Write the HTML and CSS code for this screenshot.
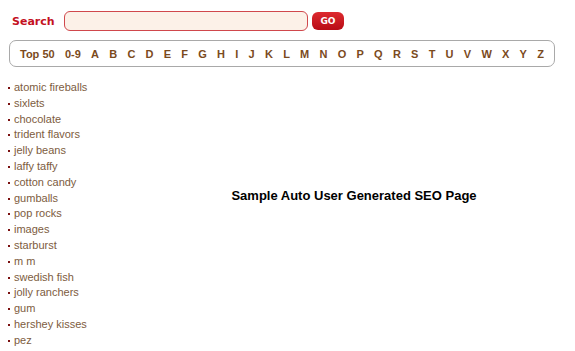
FILE: index.html
```html
<!DOCTYPE html>
<html lang="en">
<head>
    <meta charset="UTF-8">
    <title>Sample Auto User Generated SEO Page</title>
    <link rel="stylesheet" href="styles.css">
</head>
<body>
    <div class="page">
        <form class="search">
            <label class="search-label" for="q">Search</label>
            <input class="search-input" id="q" type="text">
            <button class="search-go" type="button">GO</button>
        </form>
        <div class="letters">
            <a href="#">Top 50</a>
            <a href="#">0-9</a>
            <a href="#">A</a><a href="#">B</a><a href="#">C</a><a href="#">D</a><a href="#">E</a>
            <a href="#">F</a><a href="#">G</a><a href="#">H</a><a href="#">I</a><a href="#">J</a>
            <a href="#">K</a><a href="#">L</a><a href="#">M</a><a href="#">N</a><a href="#">O</a>
            <a href="#">P</a><a href="#">Q</a><a href="#">R</a><a href="#">S</a><a href="#">T</a>
            <a href="#">U</a><a href="#">V</a><a href="#">W</a><a href="#">X</a><a href="#">Y</a>
            <a href="#">Z</a>
        </div>
        <div class="main">
            <ul class="terms">
                <li><a href="#">atomic fireballs</a></li>
                <li><a href="#">sixlets</a></li>
                <li><a href="#">chocolate</a></li>
                <li><a href="#">trident flavors</a></li>
                <li><a href="#">jelly beans</a></li>
                <li><a href="#">laffy taffy</a></li>
                <li><a href="#">cotton candy</a></li>
                <li><a href="#">gumballs</a></li>
                <li><a href="#">pop rocks</a></li>
                <li><a href="#">images</a></li>
                <li><a href="#">starburst</a></li>
                <li><a href="#">m m</a></li>
                <li><a href="#">swedish fish</a></li>
                <li><a href="#">jolly ranchers</a></li>
                <li><a href="#">gum</a></li>
                <li><a href="#">hershey kisses</a></li>
                <li><a href="#">pez</a></li>
                <li><a href="#">candy bars</a></li>
            </ul>
            <div class="content">
                <h1>Sample Auto User Generated SEO Page</h1>
            </div>
        </div>
    </div>
</body>
</html>
```

FILE: styles.css
```css
body { margin: 0; font-family: "Liberation Sans", Arial, sans-serif; background: #fff; }
.page { width: 546px; padding: 11px 0 0 9px; }
.search { display: flex; align-items: center; margin: 0; height: 20px; }
.search-label { width: 52px; padding-left: 3px; color: #c4121f; font-family: "DejaVu Sans", sans-serif; font-weight: bold; font-size: 11px; }
.search-input { box-sizing: border-box; width: 244px; height: 20px; margin: 0; border: 1px solid #d0484c; border-radius: 6px; background: #fcf1e8; }
.search-go { box-sizing: border-box; width: 32px; height: 18px; margin-left: 4px; padding: 0; border: 0; border-radius: 6px; background: linear-gradient(#dd2a2f, #b80c16); color: #fff; font-family: "DejaVu Sans", sans-serif; font-weight: bold; font-size: 9px; }
.letters { box-sizing: border-box; display: flex; justify-content: space-between; align-items: center; height: 27px; margin-top: 9px; padding: 0 10px; border: 1px solid #a9a9a9; border-radius: 7px; }
.letters a { color: #7b4a1c; font-weight: bold; font-size: 11px; text-decoration: none; }
.main { display: flex; margin-top: 13px; margin-left: -9px; width: 575px; }
.terms { width: 133px; margin: 0; padding: 0 0 0 8px; box-sizing: border-box; list-style: none; }
.terms li { position: relative; padding-left: 6px; font-size: 11px; line-height: 15.8px; }
.terms li::before { content: ""; position: absolute; left: 0; top: 7px; width: 2px; height: 2px; background: #7a1010; }
.terms a { color: #7d5c3e; text-decoration: none; }
.content { flex: 1; text-align: center; }
.content h1 { margin: 108px 0 0; font-size: 13px; font-weight: bold; color: #000; }
```
